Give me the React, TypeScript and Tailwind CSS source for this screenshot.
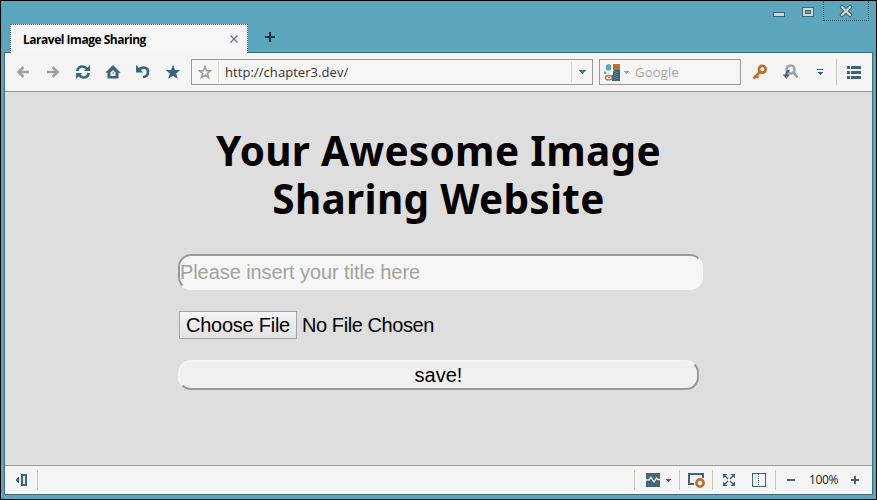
import type { ReactNode } from "react";

const UI = "font-['Open_Sans','Noto_Sans',sans-serif]";

function Icon({ w = 16, h = 16, crisp = false, children }: { w?: number; h?: number; crisp?: boolean; children: ReactNode }) {
  return (
    <svg width={w} height={h} viewBox={`0 0 ${w} ${h}`} fill="none" className="block shrink-0" shapeRendering={crisp ? "crispEdges" : "auto"}>
      {children}
    </svg>
  );
}

function Cell({ children }: { children: ReactNode }) {
  return <div className="flex h-full w-[30px] shrink-0 items-center justify-center">{children}</div>;
}

const DARK = "#3b657b";
const GREY = "#a0a09e";
const ORANGE = "#bd7029";

function TitleBar() {
  return (
    <div className="flex h-[51px] shrink-0 justify-between">
      <div className="flex items-end pl-[9px]">
        <div className="relative z-10 -mb-px flex h-[29px] w-[238px] items-center justify-between border border-b-0 border-dotted border-[#3f6275] bg-[#f6f6f6] pr-2 pl-3">
          <span className={`${UI} pt-px text-[12px] font-bold tracking-[-0.48px] text-black`}>Laravel Image Sharing</span>
          <Icon w={10} h={10}>
            <path d="M1.5 1.5l7 7M8.5 1.5l-7 7" stroke="#62777e" strokeWidth="1.2" />
          </Icon>
        </div>
        <div className="mb-[9px] ml-4">
          <Icon w={12} h={12} crisp>
            <path d="M6 1v10M1 6h10" stroke="#18343f" strokeWidth="2" />
          </Icon>
        </div>
      </div>
      <div className="mr-[7px] flex h-5">
        <div className="mt-[11px] mr-[17px]">
          <Icon w={12} h={5} crisp>
            <rect x=".5" y=".5" width="11" height="4" fill="#d2d5c8" stroke={DARK} />
          </Icon>
        </div>
        <div className="mt-[6px] mr-[9px]">
          <Icon w={12} h={10} crisp>
            <rect x=".5" y=".5" width="11" height="9" fill="#d2d5c8" stroke={DARK} />
            <rect x="3.5" y="3.5" width="5" height="3" fill="#5ba6bc" stroke={DARK} />
          </Icon>
        </div>
        <div className="flex h-5 w-[46px] items-center justify-center border border-t-0 border-dotted border-[#315c70]">
          <Icon w={14} h={14}>
            <path d="M3 3l8 8M11 3l-8 8" stroke={DARK} strokeWidth="4.4" strokeLinecap="round" />
            <path d="M3 3l8 8M11 3l-8 8" stroke="#d5d8ca" strokeWidth="2.2" strokeLinecap="round" />
          </Icon>
        </div>
      </div>
    </div>
  );
}

function Toolbar() {
  return (
    <div className="flex h-[39px] shrink-0 items-center border-b border-[#999] bg-[#f5f5f5] pl-[3px]">
      <Cell>
        <Icon w={14} h={14}>
          <path d="M13 7H3M7.5 2L2.5 7l5 5" stroke={GREY} strokeWidth="2.6" />
        </Icon>
      </Cell>
      <Cell>
        <Icon w={14} h={14}>
          <path d="M1 7h10M6.500 2l5 5-5 5" stroke={GREY} strokeWidth="2.6" />
        </Icon>
      </Cell>
      <Cell>
        <Icon w={16} h={16}>
          <path d="M2.300 7C2.800 3.800 5 2.500 7.500 2.500c2.100 0 3.400.8 4.500 2.400M13.700 9c-.5 3.200-2.700 4.500-5.200 4.500-2.100 0-3.400-.8-4.500-2.400" stroke={DARK} strokeWidth="2.700" />
          <path d="M15 1v6H9zM1 15V9h6z" fill={DARK} />
        </Icon>
      </Cell>
      <Cell>
        <Icon w={16} h={16}>
          <path d="M8 1l7.700 7.700H13.500V14.500H2.500V8.700H.3z" fill={DARK} />
          <path d="M8 6l2.500 2.500V12h-5V8.500z" fill="#f5f5f5" />
          <path d="M7.500 8h1v2h-1z" fill={ORANGE} />
        </Icon>
      </Cell>
      <Cell>
        <Icon w={16} h={16}>
          <path d="M3.500 5.500c2-1.400 4.200-2.200 6.200-1.800 2.300.5 3.600 2.200 3.300 4.600-.3 2.800-2.300 4.500-5 4.700" stroke={DARK} strokeWidth="2.700" />
          <path d="M1 1v7.500h7.200z" fill={DARK} />
        </Icon>
      </Cell>
      <Cell>
        <Icon w={16} h={16}>
          <path d="M8 .8l2 5.200h5.200l-4 3.400 1.600 5.300L8 11.700l-4.800 3 1.600-5.300L.8 6H6z" fill={DARK} />
        </Icon>
      </Cell>
      <div className="ml-[3px] flex h-[26px] w-[402px] shrink-0 items-center border border-[#999] bg-[#f6f6f6]">
        <div className="flex h-5 w-[27px] items-center justify-center border-r border-[#d5d5cf]">
          <Icon w={14} h={14}>
            <path d="M7 1.500l1.500 4.200h4.300L9.400 8.300l1.300 4.300L7 10.100l-3.700 2.500 1.300-4.300L1.200 5.700h4.300z" stroke={GREY} strokeWidth="1.500" />
          </Icon>
        </div>
        <span className={`${UI} ml-[6px] flex-1 pt-px text-[13px] tracking-[0.06px] text-[#35352f]`}>http://chapter3.dev/</span>
        <div className="flex h-5 w-[21px] items-center justify-center border-l border-[#d5d5cf]">
          <Icon w={8} h={4} crisp>
            <path d="M0 0h8L4 4z" fill="#587483" />
          </Icon>
        </div>
      </div>
      <div className="ml-[6px] flex h-[26px] w-[142px] shrink-0 items-center border border-[#999] bg-[#f6f6f6] pl-1">
        <Icon w={17} h={17}>
          <path d="M9 0h7v6H9z" fill={ORANGE} />
          <path d="M10 6h6v11H8V9z" fill={DARK} />
          <ellipse cx="4.500" cy="3.500" rx="2.800" ry="3.200" fill="#5ba6bc" />
          <path d="M0 7l3 1.500L1.500 10H0zM5 8l3 2-1 1-3-1z" fill="#5ba6bc" />
          <path d="M4 7h5v4H5z" fill="#fff" />
          <ellipse cx="4.800" cy="13.700" rx="3.300" ry="2.200" fill="#f6f6f6" stroke={ORANGE} strokeWidth="1.400" />
          <path d="M4 13.500h2" stroke={ORANGE} />
          <path d="M11 7v9M13 8v8" stroke="#5ba6bc" strokeDasharray="1 1" />
        </Icon>
        <div className="ml-[2px]">
          <Icon w={6} h={3} crisp>
            <path d="M0 0h6L3 3z" fill={GREY} />
          </Icon>
        </div>
        <span className={`${UI} ml-[6px] pt-px text-[13px] tracking-[0.2px] text-[#a9aaa0]`}>Google</span>
      </div>
      <div className="ml-1 flex h-full items-center">
        <Cell>
          <Icon w={16} h={16}>
            <circle cx="10.300" cy="5.300" r="3.400" stroke={ORANGE} strokeWidth="2.800" />
            <path d="M8 8l-6.500 6.500M3.500 11l2.800 2.800" stroke={ORANGE} strokeWidth="2.800" />
          </Icon>
        </Cell>
        <Cell>
          <Icon w={16} h={16}>
            <circle cx="8.500" cy="5.500" r="4" stroke={GREY} strokeWidth="2.500" />
            <path d="M11.500 8.500l4 5" stroke={GREY} strokeWidth="2.600" />
            <path d="M7.500 6.500C5 7 4.300 8.500 4.200 11" stroke={DARK} strokeWidth="2" />
            <path d="M.8 10.500h7L4.300 15z" fill={DARK} />
            <path d="M4 12h1v2H4z" fill={ORANGE} />
          </Icon>
        </Cell>
        <Cell>
          <Icon w={6} h={6} crisp>
            <path d="M0 0h6v1H0zM0 3h6L3 6z" fill={DARK} />
          </Icon>
        </Cell>
      </div>
      <div className="ml-[1px] h-[26px] w-px bg-[#c9c9ba]" />
      <div className="ml-[10px]">
        <Icon w={14} h={13} crisp>
          <path d="M0 0h3v3H0zM4 0h10v3H4zM0 5h3v3H0zM4 5h10v3H4zM0 10h3v3H0zM4 10h10v3H4z" fill={DARK} />
        </Icon>
      </div>
    </div>
  );
}

function Page() {
  return (
    <main className="flex flex-1 flex-col bg-[#dedede] pl-[173px] font-['Liberation_Sans',sans-serif] text-[20px] text-black">
      <h1 className="mt-[35px] h-24 w-[521px] text-center font-['Noto_Sans',sans-serif] text-[40.5px] leading-[48px] font-bold tracking-[0.3px] whitespace-nowrap text-[#050103]">
        Your Awesome Image
        <br />
        Sharing Website
      </h1>
      <input
        className="mt-[31px] h-9 w-[525px] rounded-[13px] border-2 border-t-[#999] border-r-[#f6f6f6] border-b-[#f6f6f6] border-l-[#999] bg-[#f6f6f6] p-0 tracking-[-0.08px] outline-none placeholder:text-[#a3a499]"
        placeholder="Please insert your title here"
      />
      <div className="mt-[21px] ml-px flex h-7 items-center">
        <button className="h-7 w-[118px] border border-[#a5a5a5] bg-linear-to-b from-[#f6f6f6] to-[#e2e2e2] leading-[26px] tracking-[-0.25px] whitespace-nowrap">Choose File</button>
        <span className="ml-[5px] tracking-[-0.42px]">No File Chosen</span>
      </div>
      <button className="mt-[21px] h-[30px] w-[521px] rounded-[13px] border-2 border-t-[#f5f5f5] border-r-[#999] border-b-[#999] border-l-[#f5f5f5] bg-[#f0f0f0] leading-[26px]">save!</button>
    </main>
  );
}

function Divider() {
  return <div className="h-5 w-px shrink-0 bg-[#c9c9ba]" />;
}

function StatusBar() {
  return (
    <footer className="flex h-[29px] shrink-0 items-center border-t border-[#999] bg-[#f5f5f5]">
      <div className="ml-[10px]">
        <Icon w={12} h={12} crisp>
          <path d="M4 3v6L0 6z" fill={DARK} />
          <rect x="7" y="1" width="4" height="10" stroke={DARK} strokeWidth="2" />
        </Icon>
      </div>
      <div className="ml-[10px]"><Divider /></div>
      <div className="ml-auto flex items-center">
        <Divider />
        <div className="ml-[11px]">
          <Icon w={14} h={14}>
            <path d="M0 0h14v14H0z" fill={DARK} />
            <path d="M0 7h3l2-2.500 3 4.500 2.500-4L12 6.500h2" stroke="#f1f1eb" strokeWidth="1.400" />
            <path d="M2 4h1M6 2h1M9 4h1M12 2h1M2 11h1M5 12h1M10 11h1M12 9h1" stroke={ORANGE} />
          </Icon>
        </div>
        <div className="mr-2 ml-[5px]">
          <Icon w={6} h={3} crisp><path d="M0 0h6L3 3z" fill={DARK} /></Icon>
        </div>
        <Divider />
        <div className="mr-[7px] ml-2">
          <Icon w={17} h={16}>
            <path d="M6 12H1V2h14v4" stroke={DARK} strokeWidth="2" />
            <circle cx="12" cy="11" r="3.600" fill="#f5f5f5" stroke={ORANGE} strokeWidth="2.600" />
          </Icon>
        </div>
        <Divider />
        <div className="ml-[10px]">
          <Icon w={12} h={12}>
            <path d="M1 1l4 4M11 1L7 5M1 11l4-4M11 11L7 7" stroke={DARK} strokeWidth="1.400" />
            <path d="M0 0h4.500L0 4.500zM12 0v4.500L7.500 0zM0 12V7.500L4.500 12zM12 12H7.500L12 7.500z" fill={DARK} />
          </Icon>
        </div>
        <div className="mr-[9px] ml-[17px]">
          <Icon w={14} h={14} crisp>
            <rect x=".5" y=".5" width="13" height="13" stroke={DARK} />
            <path d="M6.500 1v12" stroke={DARK} strokeDasharray="1 1" />
          </Icon>
        </div>
        <Divider />
        <div className="ml-[11px]">
          <Icon w={8} h={8} crisp><path d="M0 3h8v2H0z" fill={DARK} /></Icon>
        </div>
        <span className={`${UI} ml-[14px] w-[29px] text-[12px] tracking-[-0.4px] whitespace-nowrap text-[#222]`}>100%</span>
        <div className="mr-[13px] ml-[13px]">
          <Icon w={8} h={8} crisp><path d="M0 3h8v2H0zM3 0h2v8H3z" fill={DARK} /></Icon>
        </div>
      </div>
    </footer>
  );
}

export default function App() {
  return (
    <div className="flex h-[500px] w-[877px] flex-col border border-black bg-[#5ba6bc]">
      <TitleBar />
      <div className="mx-[3px] mb-1 flex min-h-0 flex-1 flex-col border border-[#3f697e]">
        <Toolbar />
        <Page />
        <StatusBar />
      </div>
    </div>
  );
}
